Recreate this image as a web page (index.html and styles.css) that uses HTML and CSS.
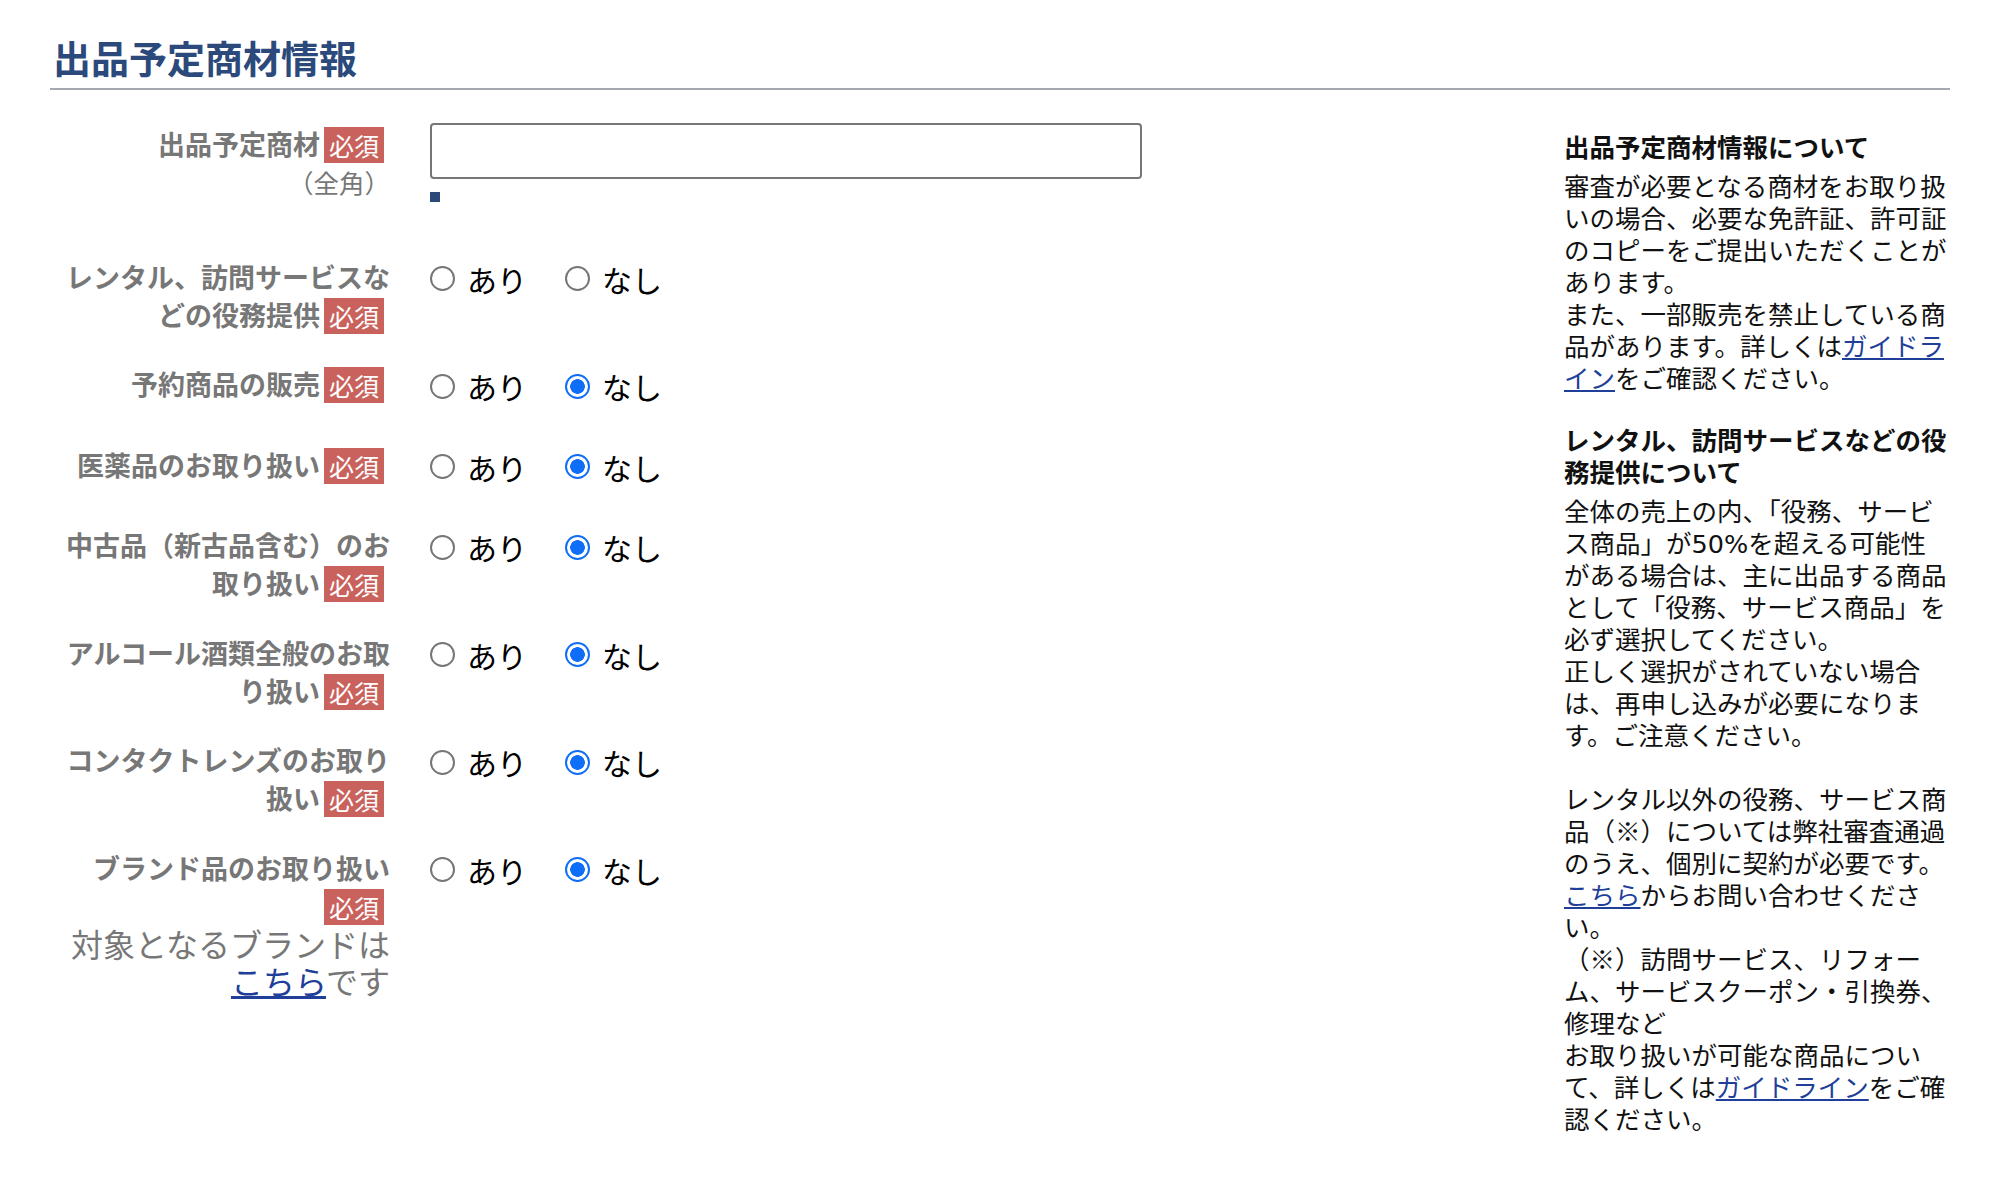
FILE: index.html
```html
<!DOCTYPE html>
<html lang="ja">
<head>
    <meta charset="UTF-8">
    <meta name="viewport" content="width=device-width, initial-scale=1.0">
    <title>出品予定商材情報</title>
    <link rel="stylesheet" href="styles.css">
</head>
<body>
    <div class="page">
        <h2 class="section-title">出品予定商材情報</h2>

        <div class="section-body">
            <div class="form">
                <div class="row row-first">
                    <div class="label">出品予定商材<span class="req">必須</span><br><span class="sub">（全角）</span></div>
                    <div class="control control-text">
                        <input type="text" class="text-input">
                        <div class="marker"></div>
                    </div>
                </div>

                <div class="row">
                    <div class="label">レンタル、訪問サービスな<br>どの役務提供<span class="req">必須</span></div>
                    <div class="control">
                        <div class="choices">
                            <label class="choice"><input type="radio" name="rental">あり</label>
                            <label class="choice"><input type="radio" name="rental">なし</label>
                        </div>
                    </div>
                </div>

                <div class="row">
                    <div class="label">予約商品の販売<span class="req">必須</span></div>
                    <div class="control">
                        <div class="choices">
                            <label class="choice"><input type="radio" name="reserve">あり</label>
                            <label class="choice"><input type="radio" name="reserve" checked>なし</label>
                        </div>
                    </div>
                </div>

                <div class="row">
                    <div class="label">医薬品のお取り扱い<span class="req">必須</span></div>
                    <div class="control">
                        <div class="choices">
                            <label class="choice"><input type="radio" name="medicine">あり</label>
                            <label class="choice"><input type="radio" name="medicine" checked>なし</label>
                        </div>
                    </div>
                </div>

                <div class="row">
                    <div class="label">中古品（新古品含む）のお<br>取り扱い<span class="req">必須</span></div>
                    <div class="control">
                        <div class="choices">
                            <label class="choice"><input type="radio" name="used">あり</label>
                            <label class="choice"><input type="radio" name="used" checked>なし</label>
                        </div>
                    </div>
                </div>

                <div class="row">
                    <div class="label">アルコール酒類全般のお取<br>り扱い<span class="req">必須</span></div>
                    <div class="control">
                        <div class="choices">
                            <label class="choice"><input type="radio" name="alcohol">あり</label>
                            <label class="choice"><input type="radio" name="alcohol" checked>なし</label>
                        </div>
                    </div>
                </div>

                <div class="row">
                    <div class="label">コンタクトレンズのお取り<br>扱い<span class="req">必須</span></div>
                    <div class="control">
                        <div class="choices">
                            <label class="choice"><input type="radio" name="lens">あり</label>
                            <label class="choice"><input type="radio" name="lens" checked>なし</label>
                        </div>
                    </div>
                </div>

                <div class="row">
                    <div class="label">ブランド品のお取り扱い<br><span class="req">必須</span>
                        <div class="note">対象となるブランドは<a href="#">こちら</a>です</div>
                    </div>
                    <div class="control">
                        <div class="choices">
                            <label class="choice"><input type="radio" name="brand">あり</label>
                            <label class="choice"><input type="radio" name="brand" checked>なし</label>
                        </div>
                    </div>
                </div>
            </div>

            <aside class="notes">
                <div class="notes-block">
                    <h3>出品予定商材情報について</h3>
                    <p>審査が必要となる商材をお取り扱いの場合、必要な免許証、許可証のコピーをご提出いただくことがあります。<br>また、一部販売を禁止している商品があります。詳しくは<a href="#">ガイドライン</a>をご確認ください。</p>
                </div>
                <div class="notes-block">
                    <h3>レンタル、訪問サービスなどの役務提供について</h3>
                    <p>全体の売上の内、「役務、サービス商品」が<span class="num">50%</span>を超える可能性がある場合は、主に出品する商品として「役務、サービス商品」を必ず選択してください。<br>正しく選択がされていない場合は、再申し込みが必要になります。ご注意ください。<br><br>レンタル以外の役務、サービス商品（※）については弊社審査通過のうえ、個別に契約が必要です。<br><a href="#">こちら</a>からお問い合わせください。<br>（※）訪問サービス、リフォーム、サービスクーポン・引換券、修理など<br>お取り扱いが可能な商品について、詳しくは<a href="#">ガイドライン</a>をご確認ください。</p>
                </div>
            </aside>
        </div>
    </div>
</body>
</html>
```

FILE: styles.css
```css
* {
    margin: 0;
    padding: 0;
    box-sizing: border-box;
    font-family: "Noto Sans CJK JP", sans-serif;
}
body {
    background-color: #fff;
}
.page {
    padding: 32px 50px 0;
}
.section-title {
    font-size: 38px;
    line-height: 50px;
    font-weight: bold;
    color: #2b4a7b;
    padding: 0 0 6px 3px;
    border-bottom: 2px solid #a4a8ae;
}
.section-body {
    display: flex;
    padding-top: 33px;
}
.form {
    flex: 1;
}
.row {
    display: flex;
    gap: 40px;
    margin-bottom: 31.5px;
}
.label {
    width: 340px;
    flex-shrink: 0;
    text-align: right;
    font-size: 27px;
    line-height: 38px;
    font-weight: bold;
    color: #777;
}
.row-first .label {
    padding-top: 2px;
}
.req {
    display: inline-block;
    vertical-align: top;
    margin: 2px 6px 0 4px;
    padding: 0 5px;
    background-color: #c9625d;
    color: #fff;
    font-size: 25px;
    font-weight: normal;
    line-height: 36px;
}
.sub {
    font-size: 25.5px;
    font-weight: normal;
}
.note {
    font-size: 32px;
    line-height: 37px;
    font-weight: normal;
}
.note a {
    color: #1f3f99;
}
.control {
    flex: 1;
}
.control-text {
    padding-bottom: 24px;
}
.text-input {
    display: block;
    width: 712px;
    height: 56px;
    border: 2px solid #767676;
    border-radius: 4px;
    background-color: #fff;
}
.marker {
    width: 10px;
    height: 10px;
    margin-top: 13px;
    background-color: #2b4a7b;
}
.choices {
    display: flex;
    align-items: center;
    height: 42px;
    margin-bottom: 7px;
}
.choice {
    display: flex;
    align-items: center;
    gap: 12px;
    margin-right: 38px;
    font-size: 30px;
    color: #000;
}
.choice input {
    appearance: none;
    width: 25px;
    height: 25px;
    margin: 0;
    border: 2px solid #767676;
    border-radius: 50%;
    background-color: #fff;
}
.choice input:checked {
    border-color: #0f6ef7;
    background: radial-gradient(circle, #0f6ef7 0 7px, #fff 7.6px);
}
.notes {
    width: 386px;
    flex-shrink: 0;
    margin-top: 7px;
    font-size: 25.5px;
    line-height: 32px;
    color: #111;
}
.notes h3 {
    font-size: 25.5px;
    line-height: 32px;
    font-weight: bold;
    margin-bottom: 7px;
}
.notes-block + .notes-block {
    margin-top: 30px;
}
.notes a {
    color: #1f3f99;
}
.num {
    font-family: "DejaVu Sans", sans-serif;
    line-height: 1;
}
```
